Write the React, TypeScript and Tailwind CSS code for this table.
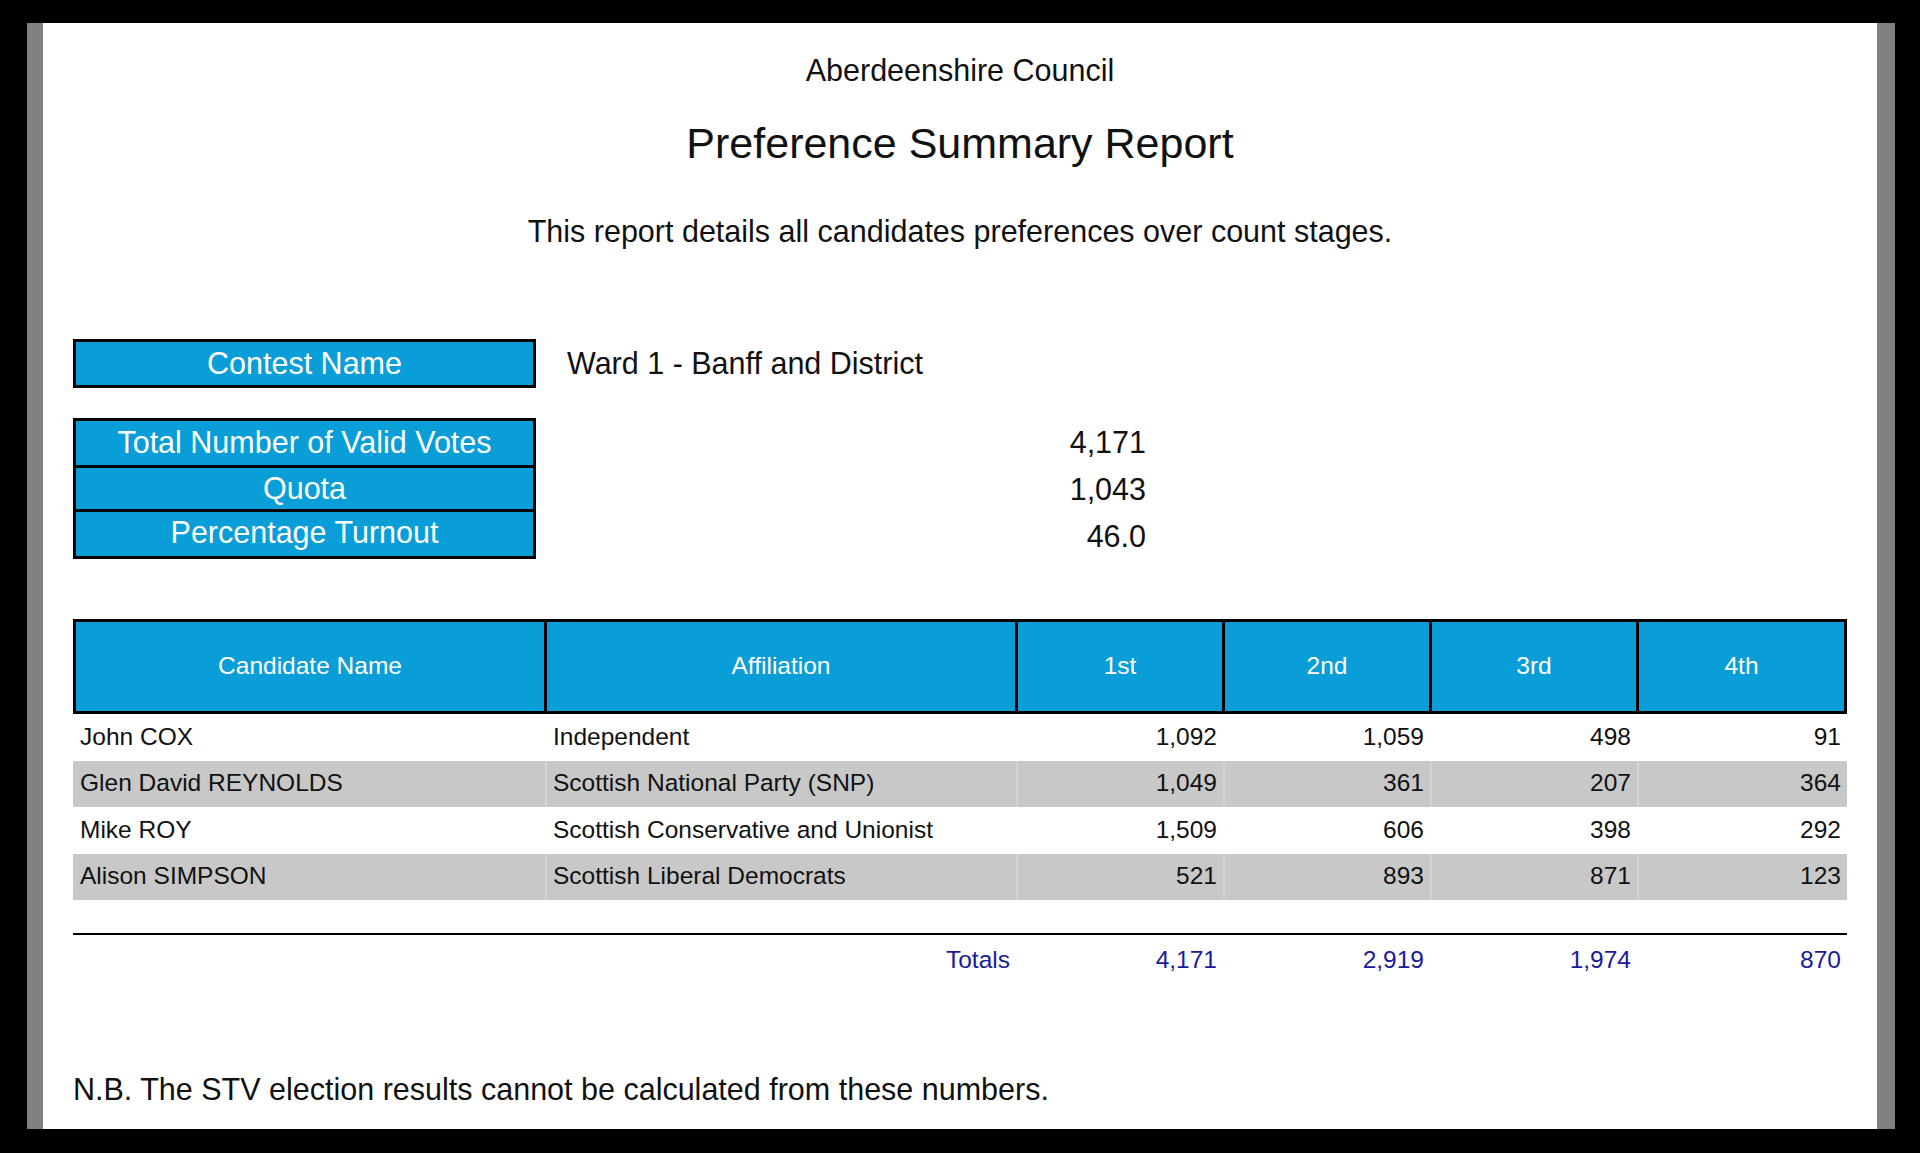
import React from 'react'

const rows = [
  { name: 'John COX', party: 'Independent', prefs: ['1,092', '1,059', '498', '91'] },
  { name: 'Glen David REYNOLDS', party: 'Scottish National Party (SNP)', prefs: ['1,049', '361', '207', '364'] },
  { name: 'Mike ROY', party: 'Scottish Conservative and Unionist', prefs: ['1,509', '606', '398', '292'] },
  { name: 'Alison SIMPSON', party: 'Scottish Liberal Democrats', prefs: ['521', '893', '871', '123'] },
]

const totals = ['4,171', '2,919', '1,974', '870']

const stats = [
  { label: 'Total Number of Valid Votes', value: '4,171' },
  { label: 'Quota', value: '1,043' },
  { label: 'Percentage Turnout', value: '46.0' },
]

const cols = 'grid grid-cols-[472px_471px_207px_207px_207px_210px]'
// header sits inside a 3px frame, so its tracks are trimmed to keep the rules on the column edges
const headCols = 'grid grid-cols-[468px_471px_207px_207px_207px_208px]'

function App() {
  return (
    <div
      className="w-full h-[1153px] bg-black pt-[23px] pb-[24px] pl-[27px] pr-[25px] flex flex-col text-[#111]"
      style={{ fontFamily: '"Liberation Sans", Arial, sans-serif' }}
    >
      <div className="flex-1 bg-white border-l-[16px] border-r-[18px] border-[#808080] px-[30px] pt-[29px]">
        <h2 className="text-center text-[30.5px] leading-[36px]">Aberdeenshire Council</h2>
        <h1 className="mt-[30px] text-center text-[43px] leading-[50px]">Preference Summary Report</h1>
        <p className="mt-[45px] text-center text-[30.5px] leading-[36px]">
          This report details all candidates preferences over count stages.
        </p>

        <div className="mt-[90px] flex items-center">
          <div className="w-[463px] h-[49px] border-[3px] border-black bg-[#0a9ed8] text-white text-[30.5px] flex items-center justify-center">
            Contest Name
          </div>
          <div className="ml-[31px] text-[30.5px]">Ward 1 - Banff and District</div>
        </div>

        <div className="mt-[30px] flex">
          <div className="w-[463px] border-[3px] border-black bg-[#0a9ed8] text-white text-[30.5px]">
            {stats.map((s, i) => (
              <div
                key={s.label}
                className={`h-[44px] flex items-center justify-center ${i > 0 ? 'border-t-[3px] border-black' : ''}`}
              >
                {s.label}
              </div>
            ))}
          </div>
          <div className="w-[610px] pt-[3px] text-[30.5px]">
            {stats.map((s, i) => (
              <div key={s.label} className={`h-[44px] flex items-center justify-end ${i > 0 ? 'mt-[3px]' : ''}`}>
                {s.value}
              </div>
            ))}
          </div>
        </div>

        <div className="mt-[60px] text-[24.5px]">
          <div className={`${headCols} h-[95px] border-[3px] border-black bg-[#0a9ed8] text-white`}>
            {['Candidate Name', 'Affiliation', '1st', '2nd', '3rd', '4th'].map((h, i) => (
              <div
                key={h}
                className={`flex items-center justify-center ${i > 0 ? 'border-l-[3px] border-black' : ''}`}
              >
                {h}
              </div>
            ))}
          </div>

          {rows.map((r, i) => {
            const shaded = i % 2 === 1
            const sep = shaded ? 'border-l-[2px] border-[#d3d3d3]' : 'border-l-[2px] border-white'
            return (
              <div key={r.name} className={`${cols} h-[46.5px] ${shaded ? 'bg-[#c8c8c8]' : 'bg-white'}`}>
                <div className="flex items-center pl-[7px]">{r.name}</div>
                <div className={`flex items-center pl-[6px] ${sep}`}>{r.party}</div>
                {r.prefs.map((p, j) => (
                  <div key={j} className={`flex items-center justify-end pr-[6px] ${sep}`}>
                    {p}
                  </div>
                ))}
              </div>
            )
          })}

          <div className="mt-[33px] border-t-[2px] border-black" />
          <div className={`${cols} h-[50px] text-[#1a1a9c]`}>
            <div />
            <div className="flex items-center justify-end pr-[6px]">Totals</div>
            {totals.map((t, j) => (
              <div key={j} className="flex items-center justify-end pr-[6px]">
                {t}
              </div>
            ))}
          </div>
        </div>

        <p className="mt-[86px] text-[30.5px] leading-[36px]">
          N.B. The STV election results cannot be calculated from these numbers.
        </p>
      </div>
    </div>
  )
}

export default App
